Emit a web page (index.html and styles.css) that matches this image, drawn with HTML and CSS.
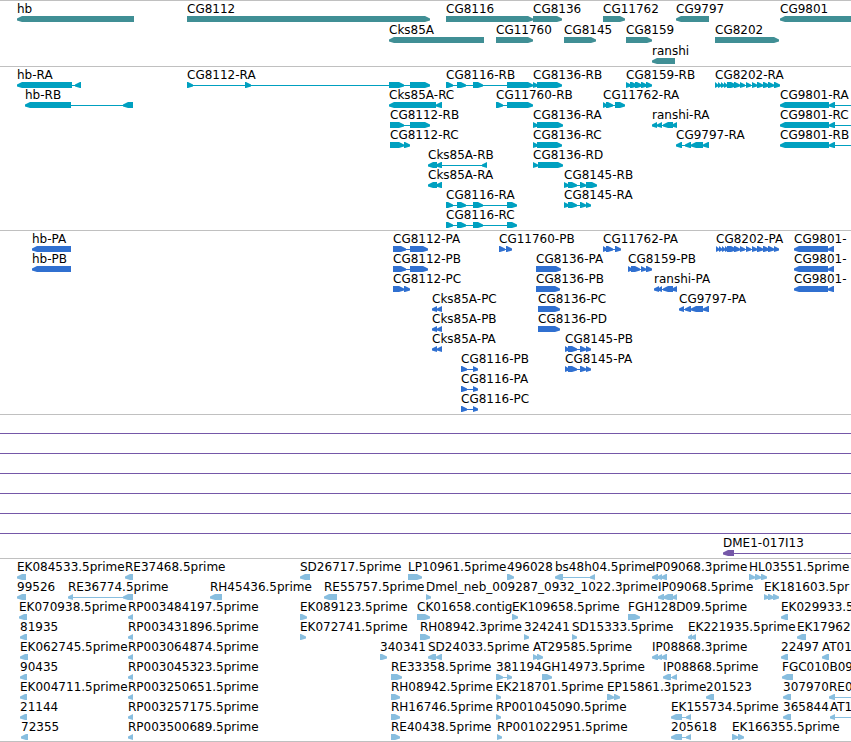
FILE: index.html
```
<!DOCTYPE html>
<html lang="en">
<head>
  <meta charset="UTF-8">
  <title>Genome Browser</title>
  <meta name="viewport" content="width=device-width, initial-scale=1.0">
  <link rel="stylesheet" href="styles.css">
</head>
<body>

<main class="browser">
  <section class="track genes" id="genes" aria-label="Genes"></section>
  <section class="track transcripts" id="transcripts" aria-label="Transcripts"></section>
  <section class="track proteins" id="proteins" aria-label="Coding sequences"></section>
  <section class="track bacs" id="bacs" aria-label="BACs"></section>
  <section class="track ests" id="ests" aria-label="ESTs"></section>
</main>

<script src="tracks.js"></script>
</body>
</html>
```

FILE: styles.css
```
* {
  box-sizing: border-box;
}
body {
  margin: 0;
  background: #fff;
  color: #000;
  font-family: "DejaVu Sans", sans-serif;
  font-size: 12px;
}
.browser {
  overflow: hidden;
  border-bottom: 1px solid #c0c0c0;
}
.track {
  border-top: 1px solid #c0c0c0;
  padding-bottom: 3px;
}
.row {
  display: block;
  width: 100%;
  height: 20px;
  overflow: visible;
}
.row text {
  fill: #000;
}
.genes {
  color: #408f95;
  padding-bottom: 2px;
}
.genes .row {
  height: 21px;
}
.transcripts {
  color: #00a0c0;
}
.proteins {
  color: #3070d0;
}
.bacs {
  color: #7558a8;
}
.ests {
  color: #88bedf;
  padding-bottom: 2px;
}
```

FILE: tracks.js
```
// one feature: [name, strand, start, end, start, end, ...]
// a last pair with a null end only extends the connecting line
const EDGE = 4000;

const tracks = {
  genes: [
    [
      ['hb', '-', 17, 134],
      ['CG8112', '+', 187, 430],
      ['CG8116', '+', 446, 533],
      ['CG8136', '+', 533, 562],
      ['CG11762', '+', 603, 625],
      ['CG9797', '-', 676, 709],
      ['CG9801', '-', 780, EDGE]
    ],
    [
      ['Cks85A', '-', 389, 484],
      ['CG11760', '+', 496, 533],
      ['CG8145', '+', 564, 596],
      ['CG8159', '+', 626, 652],
      ['CG8202', '+', 715, 779]
    ],
    [
      ['ranshi', '-', 652, 675]
    ]
  ],
  transcripts: [
    [
      ['hb-RA', '-', 17, 72, 75, 81],
      ['CG8112-RA', '+', 187, 193, 245, 251, 389, 404, 410, 430],
      ['CG8116-RB', '+', 446, 453, 457, 466, 473, 483, 507, 533],
      ['CG8136-RB', '+', 533, 538, 537, 562],
      ['CG8159-RB', '+', 626, 631, 630, 637, 635, 642, 641, 647, 646, 652],
      ['CG8202-RA', '+', 715, 718, 718, 721, 721, 724, 724, 727, 727, 736, 734, 740, 740, 745, 746, 751, 752, 757, 757, 763, 763, 769, 768, 774, 774, 780]
    ],
    [
      ['hb-RB', '-', 25, 71, 123, 133],
      ['Cks85A-RC', '-', 389, 436, 436, 442],
      ['CG11760-RB', '+', 496, 503, 507, 533],
      ['CG11762-RA', '+', 603, 607, 606, 613, 615, 625],
      ['CG9801-RA', '-', 780, 829, 829, 835, EDGE, null]
    ],
    [
      ['CG8112-RB', '+', 390, 404, 410, 430],
      ['CG8136-RA', '+', 533, 538, 537, 563],
      ['ranshi-RA', '-', 652, 657, 657, 662, 663, 673, 672, 677],
      ['CG9801-RC', '-', 780, 829, 829, 835, EDGE, null]
    ],
    [
      ['CG8112-RC', '+', 390, 404, 404, 410],
      ['CG8136-RC', '+', 533, 538, 537, 562],
      ['CG9797-RA', '-', 676, 682, 685, 691, 691, 703, 703, 709],
      ['CG9801-RB', '-', 780, 829, 829, 835, EDGE, null]
    ],
    [
      ['Cks85A-RB', '-', 428, 437, 436, 442, 482, 487],
      ['CG8136-RD', '+', 533, 538, 538, 563]
    ],
    [
      ['Cks85A-RA', '-', 428, 437, 436, 442],
      ['CG8145-RB', '+', 564, 569, 568, 577, 580, 586, 586, 597]
    ],
    [
      ['CG8116-RA', '+', 446, 453, 457, 466, 473, 483, 507, 517],
      ['CG8145-RA', '+', 564, 569, 568, 577, 580, 586, 586, 591]
    ],
    [
      ['CG8116-RC', '+', 446, 453, 457, 466, 473, 483, 507, 517]
    ]
  ],
  proteins: [
    [
      ['hb-PA', '-', 32, 71],
      ['CG8112-PA', '+', 393, 406, 410, 428],
      ['CG11760-PB', '+', 499, 505, 506, 512],
      ['CG11762-PA', '+', 603, 607, 606, 613, 615, 621],
      ['CG8202-PA', '+', 716, 719, 719, 722, 722, 725, 725, 728, 727, 736, 734, 740, 740, 745, 746, 751, 752, 757, 757, 763, 763, 769, 768, 774, 774, 779],
      ['CG9801-', '-', 794, 828, 828, 834]
    ],
    [
      ['hb-PB', '-', 32, 71],
      ['CG8112-PB', '+', 393, 406, 410, 428],
      ['CG8136-PA', '+', 536, 561],
      ['CG8159-PB', '+', 628, 632, 631, 640, 641, 646, 646, 652],
      ['CG9801-', '-', 794, 828, 828, 834]
    ],
    [
      ['CG8112-PC', '+', 393, 404, 404, 410],
      ['CG8136-PB', '+', 536, 560],
      ['ranshi-PA', '-', 654, 659, 658, 662, 663, 673, 672, 677],
      ['CG9801-', '-', 794, 828, 828, 834]
    ],
    [
      ['Cks85A-PC', '-', 432, 437, 437, 442],
      ['CG8136-PC', '+', 538, 560],
      ['CG9797-PA', '-', 679, 684, 685, 691, 691, 703, 703, 709]
    ],
    [
      ['Cks85A-PB', '-', 432, 437, 437, 442],
      ['CG8136-PD', '+', 538, 560]
    ],
    [
      ['Cks85A-PA', '-', 432, 437, 437, 442],
      ['CG8145-PB', '+', 565, 569, 568, 577, 580, 586, 586, 591]
    ],
    [
      ['CG8116-PB', '+', 461, 467, 473, 478],
      ['CG8145-PA', '+', 565, 569, 568, 577, 580, 586, 586, 591]
    ],
    [
      ['CG8116-PA', '+', 461, 467, 473, 478]
    ],
    [
      ['CG8116-PC', '+', 461, 467, 473, 478]
    ]
  ],
  bacs: [
    [['', '-', 0, 0, EDGE, null]],
    [['', '-', 0, 0, EDGE, null]],
    [['', '-', 0, 0, EDGE, null]],
    [['', '-', 0, 0, EDGE, null]],
    [['', '-', 0, 0, EDGE, null]],
    [['', '-', 0, 0, EDGE, null]],
    [['DME1-017I13', '-', 723, 734, EDGE, null]]
  ],
  ests: [
    [
      ['EK084533.5prime', '-', 17, 26],
      ['RE37468.5prime', '-', 125, 133],
      ['SD26717.5prime', '-', 300, 310],
      ['LP10961.5prime', '+', 408, 422],
      ['496028', '+', 507, 514],
      ['bs48h04.5prime', '-', 555, 563, 590, 595],
      ['IP09068.3prime', '-', 652, 658, 657, 662, 661, 667],
      ['HL03551.5prime', '+', 749, 755, 755, 761, 761, 767]
    ],
    [
      ['99526', '-', 17, 26],
      ['RE36774.5prime', '-', 68, 73, 123, 133],
      ['RH45436.5prime', '-', 210, 222],
      ['RE55757.5prime', '-', 324, 337],
      ['Dmel_neb_009287_0932_1022.3prime', '+', 426, 431],
      ['IP09068.5prime', '-', 658, 664, 663, 673, 672, 677],
      ['EK181603.5pr', '+', 764, 769, 768, 774, 773, 779]
    ],
    [
      ['EK070938.5prime', '-', 19, 27],
      ['RP003484197.5prime', '-', 128, 133],
      ['EK089123.5prime', '+', 300, 307],
      ['CK01658.contig', '+', 417, 430],
      ['EK109658.5prime', '+', 512, 518],
      ['FGH128D09.5prime', '+', 628, 640],
      ['EK029933.5', '-', 781, 788]
    ],
    [
      ['81935', '-', 20, 27],
      ['RP003431896.5prime', '-', 128, 133],
      ['EK072741.5prime', '+', 300, 306],
      ['RH08942.3prime', '+', 420, 430],
      ['324241', '+', 524, 529],
      ['SD15333.5prime', '+', 572, 577],
      ['EK221935.5prime', '-', 688, 692, 691, 696],
      ['EK17962', '-', 797, 806]
    ],
    [
      ['EK062745.5prime', '-', 20, 28],
      ['RP003064874.5prime', '-', 128, 133],
      ['340341', '+', 380, 387],
      ['SD24033.5prime', '-', 428, 436, 436, 442],
      ['AT29585.5prime', '+', 533, 538, 537, 543],
      ['IP08868.3prime', '-', 652, 658, 657, 662, 661, 667],
      ['22497', '-', 781, 788],
      ['AT01', '-', 822, 829]
    ],
    [
      ['90435', '-', 20, 27],
      ['RP003045323.5prime', '-', 128, 133],
      ['RE33358.5prime', '+', 391, 402],
      ['381194', '+', 496, 503, 507, 512],
      ['GH14973.5prime', '+', 542, 552],
      ['IP08868.5prime', '-', 663, 671, 672, 677],
      ['FGC010B09', '-', 782, 793]
    ],
    [
      ['EK004711.5prime', '-', 20, 27],
      ['RP003250651.5prime', '-', 128, 133],
      ['RH08942.5prime', '+', 391, 400],
      ['EK218701.5prime', '+', 496, 501],
      ['EP15861.3prime', '+', 607, 614, 614, 620],
      ['201523', '-', 706, 714],
      ['307970', '-', 783, 791],
      ['RE0', '-', 829, 835, EDGE, null]
    ],
    [
      ['21144', '-', 20, 27],
      ['RP003257175.5prime', '-', 128, 133],
      ['RH16746.5prime', '+', 391, 400],
      ['RP001045090.5prime', '+', 496, 501],
      ['EK155734.5prime', '-', 671, 682, 686, 691],
      ['365844', '-', 783, 791],
      ['AT1', '-', 830, 835, EDGE, null]
    ],
    [
      ['72355', '-', 21, 28],
      ['RP003500689.5prime', '-', 128, 133],
      ['RE40438.5prime', '+', 391, 400],
      ['RP001022951.5prime', '+', 497, 502],
      ['205618', '-', 671, 682, 686, 691],
      ['EK166355.5prime', '+', 732, 738, 738, 744]
    ]
  ]
};

const SVG = 'http://www.w3.org/2000/svg';

function add(parent, tag, attrs) {
  const el = document.createElementNS(SVG, tag);
  for (const key in attrs) {
    el.setAttribute(key, attrs[key]);
  }
  parent.appendChild(el);
  return el;
}

// block with a blunt 5px point in the direction of the strand
function arrow(start, end, strand) {
  const tip = Math.min(5, end - start);
  if (strand === '+') {
    return `M${start} 15H${end - tip}L${end} 17.5V19.5L${end - tip} 21H${start}Z`;
  }
  return `M${end} 15H${start + tip}L${start} 17.5V19.5L${start + tip} 21H${end}Z`;
}

function drawFeature(svg, feature) {
  const [name, strand, ...spans] = feature;
  const start = spans[0];
  const last = spans[spans.length - 1];
  const end = last === null ? spans[spans.length - 2] : last;

  if (spans.length > 2) {
    add(svg, 'rect', { x: start, y: 18, width: end - start, height: 1, fill: 'currentColor' });
  }

  for (let i = 0; i < spans.length; i += 2) {
    if (spans[i + 1] > spans[i]) {
      add(svg, 'path', { d: arrow(spans[i], spans[i + 1], strand), fill: 'currentColor' });
    }
  }
  if (name) {
    add(svg, 'text', { x: start, y: 12 }).textContent = name;
  }
}

for (const id in tracks) {
  const track = document.getElementById(id);
  tracks[id].forEach(features => {
    const svg = add(track, 'svg', { class: 'row' });
    features.forEach(feature => drawFeature(svg, feature));
  });
}
```
